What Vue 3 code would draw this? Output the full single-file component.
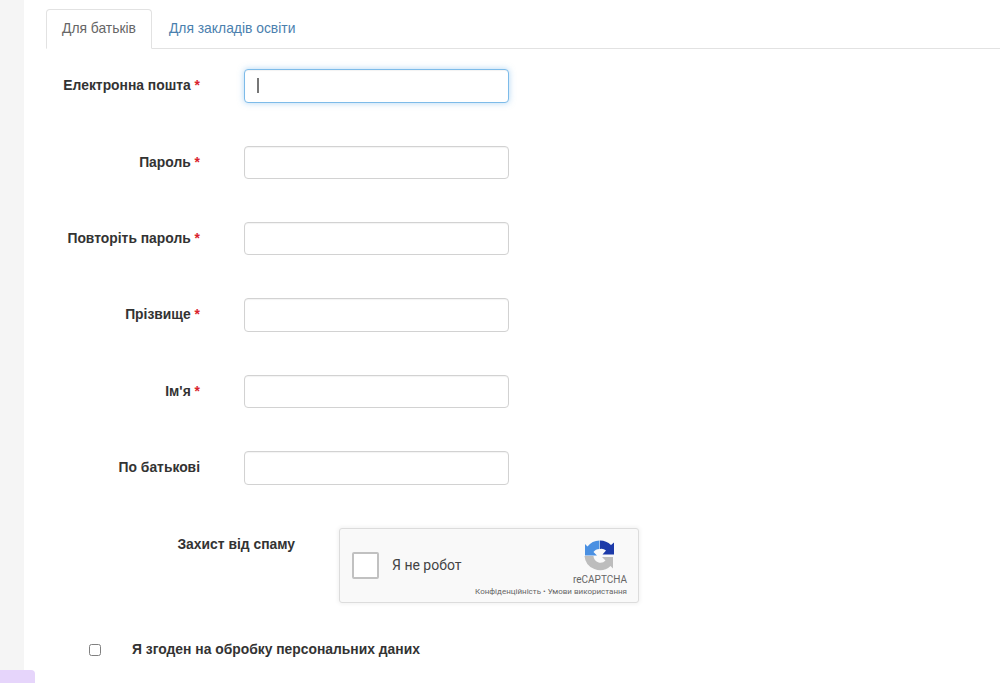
<script setup>
const fields = [
  { label: 'Електронна пошта', required: true, focused: true },
  { label: 'Пароль', required: true },
  { label: 'Повторіть пароль', required: true },
  { label: 'Прізвище', required: true },
  { label: "Ім'я", required: true },
  { label: 'По батькові', required: false },
]
</script>

<template>
  <div class="page">
    <aside class="sidebar"></aside>
    <div class="badge"></div>
    <main class="content">
      <ul class="tabs">
        <li class="tab active">Для батьків</li>
        <li class="tab">Для закладів освіти</li>
      </ul>

      <form class="form">
        <div v-for="f in fields" :key="f.label" class="row">
          <label class="label">{{ f.label }}<span v-if="f.required" class="req"> *</span></label>
          <div class="input" :class="{ focused: f.focused }">
            <span v-if="f.focused" class="caret"></span>
          </div>
        </div>

        <div class="captchaRow">
          <label class="captchaLabel">Захист від спаму</label>
          <div class="captcha">
            <span class="captchaBox"></span>
            <span class="captchaText">Я не робот</span>
            <div class="captchaBrand">
              <svg class="captchaLogo" viewBox="0 0 32 32" width="32" height="32">
                <path d="M15.5 .5A15.5 15.5 0 0 0 3.5 6.5L1 4V15.5H13L9.5 12A7 7 0 0 1 15.5 9Z" fill="#4a90e2" />
                <path d="M16 .5A15.5 15.5 0 0 1 27 5L30 2.5V14.5H18.5L22 10.5A7 7 0 0 0 16 9Z" fill="#1c3aa9" />
                <path d="M.5 16H9.5A7 7 0 0 0 21.5 20.5L18 17H29V28.5L26.5 26A15.5 15.5 0 0 1 .5 16Z" fill="#bdbdbd" />
              </svg>
              <span class="brandName">reCAPTCHA</span>
              <span class="brandLinks">Конфіденційність • Умови використання</span>
            </div>
          </div>
        </div>

        <div class="agree">
          <span class="checkbox"></span>
          <span class="agreeText">Я згоден на обробку персональних даних</span>
        </div>
      </form>
    </main>
  </div>
</template>

<style>
html,
body {
  margin: 0;
  background: #fff;
  overflow: hidden;
}
</style>

<style scoped>
.page {
  display: flex;
  height: 683px;
  position: relative;
  overflow: hidden;
  font-family: "Liberation Sans", Arial, sans-serif;
  font-size: 13.86px;
  color: #333;
}

.sidebar {
  width: 24px;
  flex-shrink: 0;
  background: #f5f5f5;
}

.badge {
  position: absolute;
  left: 0;
  top: 670px;
  width: 35px;
  height: 20px;
  background: #e6d5fb;
  border-top-right-radius: 4px;
}

.content {
  flex: 1;
  padding: 9px 0 0 22px;
}

.tabs {
  display: flex;
  list-style: none;
  margin: 0;
  padding: 0;
  height: 39px;
  border-bottom: 1px solid #e2e2e2;
}

.tab {
  height: 40px;
  box-sizing: border-box;
  padding: 9px 15px 0 16px;
  line-height: 18px;
  color: #4a80ae;
  border: 1px solid transparent;
}

.tab.active {
  padding: 9px 15px 0 15px;
  color: #666;
  background: #fff;
  border-color: #e2e2e2 #e2e2e2 #fff;
  border-radius: 4px 4px 0 0;
}

.form {
  padding-top: 20.2px;
}

.row {
  display: flex;
  gap: 44px;
  height: 33.4px;
  margin-bottom: 43px;
}

.label {
  width: 154px;
  text-align: right;
  font-weight: bold;
  line-height: 33px;
}

.req {
  color: #d9232d;
}

.input {
  width: 265px;
  height: 33.4px;
  box-sizing: border-box;
  border: 1px solid #d2d2d2;
  border-radius: 4px;
  background: #fff;
  box-shadow: inset 0 1px 1px rgba(0, 0, 0, 0.05);
  display: flex;
  align-items: center;
  padding-left: 12px;
}

.input.focused {
  border-color: #7dbbe9;
  box-shadow: inset 0 1px 1px rgba(0, 0, 0, 0.05), 0 0 6px rgba(102, 175, 233, 0.5);
}

.caret {
  width: 2px;
  height: 15px;
  background: #777;
}

.captchaRow {
  display: flex;
  gap: 44px;
}

.captchaLabel {
  width: 249px;
  text-align: right;
  font-weight: bold;
  line-height: 33px;
}

.captcha {
  width: 300px;
  height: 75px;
  box-sizing: border-box;
  border: 1px solid #dcdcdc;
  border-radius: 3px;
  background: #f9f9f9;
  box-shadow: 0 0 4px 1px rgba(0, 0, 0, 0.06);
  display: flex;
  align-items: center;
  padding-left: 12px;
}

.captchaBox {
  width: 23px;
  height: 23px;
  border: 2px solid #c1c1c1;
  border-radius: 2px;
  background: #fff;
}

.captchaText {
  margin-left: 13px;
  font-family: Roboto, "Liberation Sans", sans-serif;
  font-size: 14px;
  color: #444;
}

.captchaBrand {
  align-self: flex-start;
  margin-left: auto;
  margin-right: 11px;
  padding-top: 11px;
  display: flex;
  flex-direction: column;
  align-items: flex-end;
  font-family: Roboto, "Liberation Sans", sans-serif;
  color: #666;
}

.captchaLogo {
  margin: 0 11px 0 0;
  display: block;
}

.brandName {
  font-size: 10px;
  line-height: 12px;
  margin-top: 2px;
}

.brandLinks {
  font-size: 8px;
  line-height: 10px;
  margin-top: 1px;
  white-space: nowrap;
}

.agree {
  display: flex;
  align-items: center;
  margin-top: 38px;
  padding-left: 43px;
}

.checkbox {
  width: 12px;
  height: 12px;
  box-sizing: border-box;
  border: 1px solid #808080;
  border-radius: 2.5px;
  background: #fff;
}

.agreeText {
  margin-left: 31px;
  margin-bottom: 2px;
  font-weight: bold;
}
</style>
